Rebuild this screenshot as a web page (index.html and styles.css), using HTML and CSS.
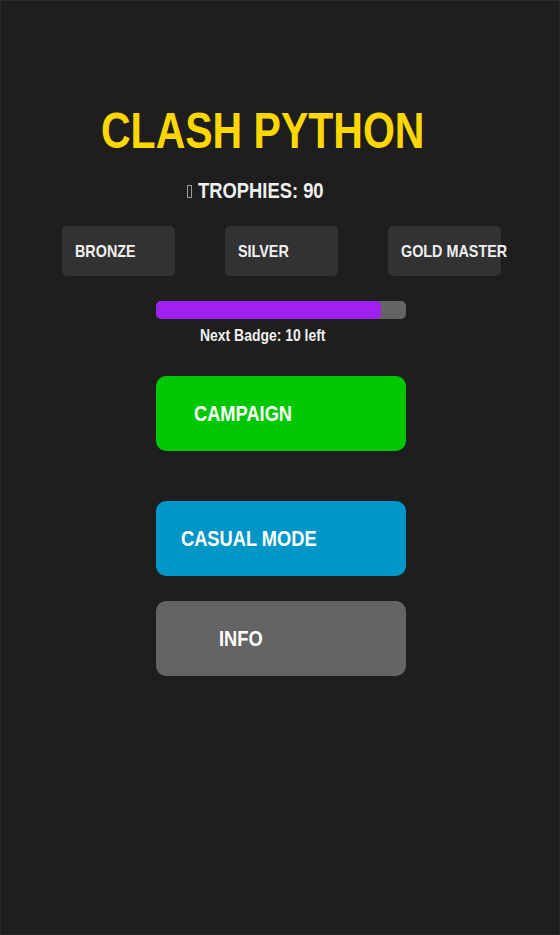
FILE: index.html
```html
<!DOCTYPE html>
<html lang="en">
<head>
<meta charset="utf-8">
<title>Clash Python</title>
<link rel="stylesheet" href="styles.css">
</head>
<body>
<main class="screen">
  <h1 class="title"><span class="narrow">CLASH PYTHON</span></h1>
  <div class="trophies"><span class="tofu"></span><span class="narrow">TROPHIES: 90</span></div>
  <div class="badges">
    <div class="badge"><span class="narrow">BRONZE</span></div>
    <div class="badge"><span class="narrow">SILVER</span></div>
    <div class="badge"><span class="narrow">GOLD MASTER</span></div>
  </div>
  <div class="progress"><div class="progress-fill" style="width: 90%"></div></div>
  <div class="next"><span class="narrow">Next Badge: 10 left</span></div>
  <button class="btn btn-campaign"><span class="narrow">CAMPAIGN</span></button>
  <button class="btn btn-casual"><span class="narrow">CASUAL MODE</span></button>
  <button class="btn btn-info"><span class="narrow">INFO</span></button>
</main>
</body>
</html>
```
FILE: styles.css
```css
* { box-sizing: border-box; }
html, body { margin: 0; padding: 0; background: #1e1e1e; }
.screen {
  width: 560px;
  height: 935px;
  border: 1px solid #2a2a2a;
  display: flex;
  flex-direction: column;
  align-items: stretch;
  font-family: "Liberation Sans", Arial, sans-serif;
  font-weight: bold;
  color: #f0f0f0;
}
.narrow {
  display: inline-block;
  white-space: nowrap;
  transform: scaleX(0.82);
  transform-origin: left center;
}
.title {
  margin: 105px 0 0 0;
  padding-left: 100px;
  font-size: 50px;
  line-height: 50px;
  font-weight: bold;
  color: #ffd700;
}
.trophies {
  margin-top: 24px;
  padding-left: 186px;
  font-size: 22px;
  line-height: 22px;
  display: flex;
  align-items: center;
}
.trophies .narrow { transform: scaleX(0.835); }
.tofu {
  display: inline-block;
  width: 5px;
  height: 13px;
  border: 1px solid #9a9a9a;
  margin-right: 6px;
}
.badges {
  margin-top: 24px;
  display: flex;
  justify-content: center;
  gap: 50px;
  padding-left: 2px;
}
.badge {
  width: 113px;
  height: 50px;
  background: #323232;
  border-radius: 5px;
  display: flex;
  align-items: center;
  padding-left: 13px;
  padding-top: 2px;
  font-size: 17px;
  white-space: nowrap;
}
.badge .narrow { transform: scaleX(0.845); }
.progress {
  margin: 25px auto 0;
  width: 250px;
  height: 18px;
  background: #646464;
  border-radius: 5px;
  overflow: hidden;
  position: relative;
  left: 1px;
}
.progress-fill {
  height: 100%;
  background: #a020f0;
  border-radius: 5px;
}
.next {
  margin-top: 7px;
  padding-left: 199px;
  font-size: 17px;
  line-height: 19px;
}
.btn {
  display: flex;
  align-items: center;
  width: 250px;
  height: 75px;
  margin: 0 0 0 155px;
  border: none;
  border-radius: 10px;
  font-family: inherit;
  font-weight: bold;
  font-size: 22px;
  color: #ffffff;
  text-align: left;
}
.btn .narrow { transform: scaleX(0.83); }
.btn-campaign { margin-top: 31px; background: #00c800; padding-left: 38px; }
.btn-casual { margin-top: 50px; background: #0096c8; padding-left: 25px; }
.btn-info { margin-top: 25px; background: #646464; padding-left: 63px; }
```
